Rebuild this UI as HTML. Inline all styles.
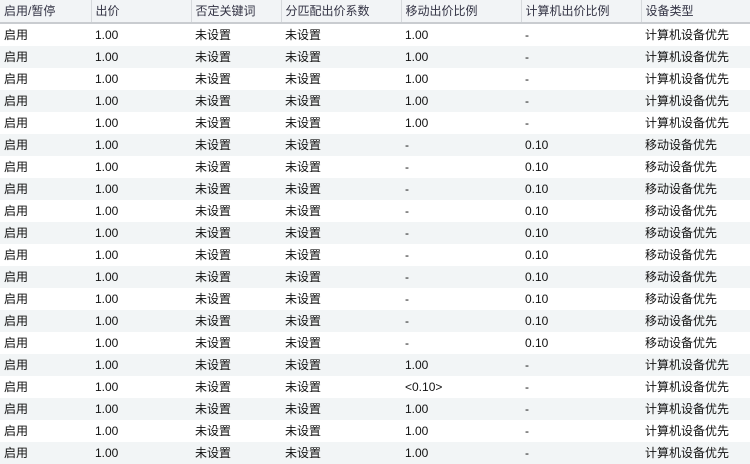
<!DOCTYPE html>
<html><head><meta charset="utf-8"><style>
body{margin:0;width:750px;height:464px;overflow:hidden;background:#fff;font-family:"Liberation Sans","Noto Sans CJK SC",sans-serif;font-size:12px;color:#111}
table{border-collapse:collapse;table-layout:fixed;width:750px}
th{height:22px;background:#f2f4f6;font-weight:normal;text-align:left;padding:0 0 0 4px;border-bottom:2px solid #c9ccd0;border-right:1px solid #d6d9dc;color:#334;white-space:nowrap;overflow:hidden;line-height:22px}
th:last-child{border-right:none}
td{height:22px;padding:0 0 0 4px;line-height:22px;white-space:nowrap;overflow:hidden}
tr.g td{background:#f2f5f6}
</style></head><body>
<table>
<colgroup><col style="width:91px"><col style="width:100px"><col style="width:90px"><col style="width:120px"><col style="width:120px"><col style="width:120px"><col style="width:109px"></colgroup>
<tr><th>启用/暂停</th><th>出价</th><th>否定关键词</th><th>分匹配出价系数</th><th>移动出价比例</th><th>计算机出价比例</th><th>设备类型</th></tr>
<tr><td>启用</td><td>1.00</td><td>未设置</td><td>未设置</td><td>1.00</td><td>-</td><td>计算机设备优先</td></tr>
<tr class="g"><td>启用</td><td>1.00</td><td>未设置</td><td>未设置</td><td>1.00</td><td>-</td><td>计算机设备优先</td></tr>
<tr><td>启用</td><td>1.00</td><td>未设置</td><td>未设置</td><td>1.00</td><td>-</td><td>计算机设备优先</td></tr>
<tr class="g"><td>启用</td><td>1.00</td><td>未设置</td><td>未设置</td><td>1.00</td><td>-</td><td>计算机设备优先</td></tr>
<tr><td>启用</td><td>1.00</td><td>未设置</td><td>未设置</td><td>1.00</td><td>-</td><td>计算机设备优先</td></tr>
<tr class="g"><td>启用</td><td>1.00</td><td>未设置</td><td>未设置</td><td>-</td><td>0.10</td><td>移动设备优先</td></tr>
<tr><td>启用</td><td>1.00</td><td>未设置</td><td>未设置</td><td>-</td><td>0.10</td><td>移动设备优先</td></tr>
<tr class="g"><td>启用</td><td>1.00</td><td>未设置</td><td>未设置</td><td>-</td><td>0.10</td><td>移动设备优先</td></tr>
<tr><td>启用</td><td>1.00</td><td>未设置</td><td>未设置</td><td>-</td><td>0.10</td><td>移动设备优先</td></tr>
<tr class="g"><td>启用</td><td>1.00</td><td>未设置</td><td>未设置</td><td>-</td><td>0.10</td><td>移动设备优先</td></tr>
<tr><td>启用</td><td>1.00</td><td>未设置</td><td>未设置</td><td>-</td><td>0.10</td><td>移动设备优先</td></tr>
<tr class="g"><td>启用</td><td>1.00</td><td>未设置</td><td>未设置</td><td>-</td><td>0.10</td><td>移动设备优先</td></tr>
<tr><td>启用</td><td>1.00</td><td>未设置</td><td>未设置</td><td>-</td><td>0.10</td><td>移动设备优先</td></tr>
<tr class="g"><td>启用</td><td>1.00</td><td>未设置</td><td>未设置</td><td>-</td><td>0.10</td><td>移动设备优先</td></tr>
<tr><td>启用</td><td>1.00</td><td>未设置</td><td>未设置</td><td>-</td><td>0.10</td><td>移动设备优先</td></tr>
<tr class="g"><td>启用</td><td>1.00</td><td>未设置</td><td>未设置</td><td>1.00</td><td>-</td><td>计算机设备优先</td></tr>
<tr><td>启用</td><td>1.00</td><td>未设置</td><td>未设置</td><td>&lt;0.10&gt;</td><td>-</td><td>计算机设备优先</td></tr>
<tr class="g"><td>启用</td><td>1.00</td><td>未设置</td><td>未设置</td><td>1.00</td><td>-</td><td>计算机设备优先</td></tr>
<tr><td>启用</td><td>1.00</td><td>未设置</td><td>未设置</td><td>1.00</td><td>-</td><td>计算机设备优先</td></tr>
<tr class="g"><td>启用</td><td>1.00</td><td>未设置</td><td>未设置</td><td>1.00</td><td>-</td><td>计算机设备优先</td></tr>
</table>
</body></html>
